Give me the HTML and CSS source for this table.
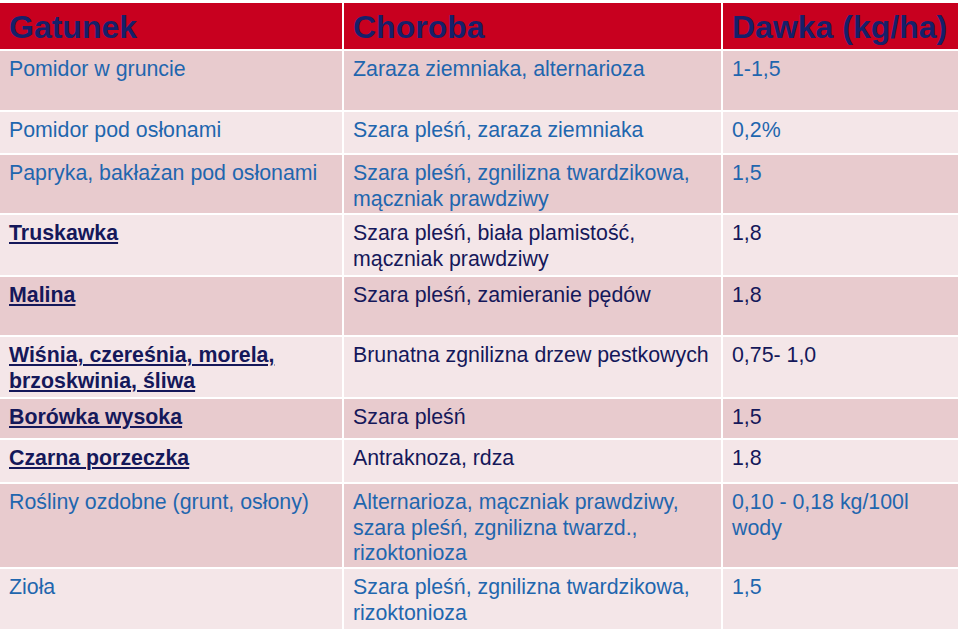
FILE: index.html
```html
<!DOCTYPE html>
<html lang="pl">
<head>
<meta charset="utf-8">
<title>Gatunek – Choroba – Dawka</title>
<link rel="stylesheet" href="styles.css">
</head>
<body>
<div class="sheet">
  <div class="grid">
    <div class="cell head">Gatunek</div>
    <div class="cell head">Choroba</div>
    <div class="cell head">Dawka (kg/ha)</div>

    <div class="cell dark blue">Pomidor w gruncie</div>
    <div class="cell dark blue">Zaraza ziemniaka, alternarioza</div>
    <div class="cell dark blue">1-1,5</div>

    <div class="cell light blue">Pomidor pod osłonami</div>
    <div class="cell light blue">Szara pleśń, zaraza ziemniaka</div>
    <div class="cell light blue">0,2%</div>

    <div class="cell dark blue">Papryka, bakłażan pod osłonami</div>
    <div class="cell dark blue">Szara pleśń, zgnilizna twardzikowa,<br>mączniak prawdziwy</div>
    <div class="cell dark blue">1,5</div>

    <div class="cell light navy"><span class="link">Truskawka</span></div>
    <div class="cell light navy">Szara pleśń, biała plamistość,<br>mączniak prawdziwy</div>
    <div class="cell light navy">1,8</div>

    <div class="cell dark navy"><span class="link">Malina</span></div>
    <div class="cell dark navy">Szara pleśń, zamieranie pędów</div>
    <div class="cell dark navy">1,8</div>

    <div class="cell light navy"><span class="link">Wiśnia, czereśnia, morela,<br>brzoskwinia, śliwa</span></div>
    <div class="cell light navy">Brunatna zgnilizna drzew pestkowych</div>
    <div class="cell light navy">0,75- 1,0</div>

    <div class="cell dark navy"><span class="link">Borówka wysoka</span></div>
    <div class="cell dark navy">Szara pleśń</div>
    <div class="cell dark navy">1,5</div>

    <div class="cell light navy"><span class="link">Czarna porzeczka</span></div>
    <div class="cell light navy">Antraknoza, rdza</div>
    <div class="cell light navy">1,8</div>

    <div class="cell dark blue">Rośliny ozdobne (grunt, osłony)</div>
    <div class="cell dark blue">Alternarioza, mączniak prawdziwy,<br>szara pleśń, zgnilizna twarzd.,<br>rizoktonioza</div>
    <div class="cell dark blue">0,10 - 0,18 kg/100l<br>wody</div>

    <div class="cell light blue">Zioła</div>
    <div class="cell light blue">Szara pleśń, zgnilizna twardzikowa,<br>rizoktonioza</div>
    <div class="cell light blue">1,5</div>
  </div>
</div>
</body>
</html>
```

FILE: styles.css
```css
html, body {
  margin: 0;
  padding: 0;
  background: #ffffff;
}

body {
  font-family: "Liberation Sans", Arial, sans-serif;
}

.sheet {
  padding-top: 3px;
  width: 960px;
  height: 627px;
  overflow: hidden;
}

.grid {
  display: grid;
  grid-template-columns: 342px 377px 235px;
  grid-template-rows: 46px 59px 41px 58px 60px 58px 60px 39px 42px 83px 60px;
  column-gap: 2px;
  row-gap: 2px;
  width: 958px;
}

.cell {
  box-sizing: border-box;
  padding: 6px 9px 0 9px;
  font-size: 21.33px;
  line-height: 25.6px;
  overflow: hidden;
}

.head {
  background: #c8001f;
  color: #16206a;
  font-weight: bold;
  font-size: 32px;
  line-height: 38px;
  padding-top: 5px;
}

.dark {
  background: #e8cbce;
}

.light {
  background: #f4e6e8;
}

.blue {
  color: #1f66ae;
}

.navy {
  color: #15185a;
}

.link {
  font-weight: bold;
  text-decoration: underline;
  text-decoration-thickness: 2px;
  text-underline-offset: 2px;
}
```
